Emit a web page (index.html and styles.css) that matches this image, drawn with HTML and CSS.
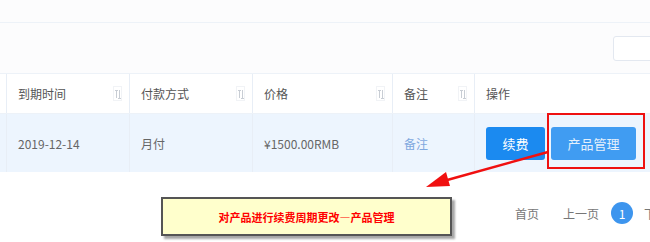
FILE: index.html
```html
<!DOCTYPE html>
<html lang="zh-CN">
<head>
  <meta charset="UTF-8">
  <title>产品列表</title>
  <link rel="stylesheet" href="styles.css">
</head>
<body>
  <div class="page">
    <div class="topbar"></div>

    <div class="toolbar">
      <input class="search" type="text">
    </div>

    <div class="table">
      <div class="row head">
        <div class="cell stub"></div>
        <div class="cell">到期时间<span class="sort"></span></div>
        <div class="cell">付款方式<span class="sort"></span></div>
        <div class="cell">价格<span class="sort"></span></div>
        <div class="cell">备注<span class="sort"></span></div>
        <div class="cell">操作</div>
      </div>
      <div class="row data">
        <div class="cell stub"></div>
        <div class="cell">2019-12-14</div>
        <div class="cell">月付</div>
        <div class="cell">¥1500.00RMB</div>
        <div class="cell"><a class="link">备注</a></div>
        <div class="cell actions">
          <button class="btn btn-renew">续费</button>
          <button class="btn btn-manage">产品管理</button>
        </div>
      </div>
    </div>

    <div class="pager">
      <span class="pager-item">首页</span>
      <span class="pager-item">上一页</span>
      <span class="pager-current">1</span>
      <span class="pager-item">下一页</span>
    </div>

    <!-- annotation layer -->
    <div class="mark-box"></div>
    <svg class="mark-arrow" width="650" height="242" viewBox="0 0 650 242">
      <line x1="548" y1="152" x2="440" y2="182" stroke="#f01010" stroke-width="2.5"/>
      <polygon points="426,187 446,172 450,186" fill="#f01010"/>
    </svg>
    <div class="note">对产品进行续费周期更改—产品管理</div>
  </div>
</body>
</html>
```

FILE: styles.css
```css
* {
  margin: 0;
  padding: 0;
  box-sizing: border-box;
}

body {
  width: 650px;
  height: 242px;
  overflow: hidden;
  background: #fff;
  font-family: "Noto Sans CJK SC", "Noto Sans", sans-serif;
  font-size: 12px;
  color: #666;
}

.page {
  position: relative;
  height: 242px;
  overflow: hidden;
}

.topbar {
  height: 23px;
  background: #fcfcfd;
  border-bottom: 1px solid #edf2f8;
}

.toolbar {
  height: 50px;
  background: #fcfcfd;
  display: flex;
  justify-content: flex-end;
  align-items: center;
  padding-top: 1px;
}

.search {
  width: 50px;
  height: 25px;
  margin-right: -13px;
  border: 1px solid #e3e8f0;
  border-radius: 3px;
  background: #fff;
}

/* Table */
.table {
  border-top: 1px solid #edf2f8;
}

.row {
  display: grid;
  grid-template-columns: 7px 123px 123px 140px 82px 1fr;
}

.head {
  height: 40px;
  background: #fff;
  border-bottom: 1px solid #edf2f8;
  color: #555;
}

.data {
  height: 58px;
  background: #edf5fe;
}

.cell {
  display: flex;
  align-items: center;
  padding-left: 11px;
  border-right: 1px solid #e8eef6;
  position: relative;
}

.cell:last-child {
  border-right: none;
}

.stub {
  padding: 0;
}

.sort {
  position: absolute;
  right: 7px;
  top: 12px;
  width: 9px;
  height: 15px;
  border: 1px solid #f1f3f6;
  background:
    linear-gradient(#c8cdd4, #c8cdd4) 2px 3px / 1px 8px no-repeat,
    linear-gradient(#c8cdd4, #c8cdd4) 5px 3px / 1px 9px no-repeat,
    linear-gradient(#c8cdd4, #c8cdd4) 1px 3px / 3px 1px no-repeat,
    linear-gradient(#c8cdd4, #c8cdd4) 4px 11px / 3px 1px no-repeat;
}

.link {
  color: #7fa8de;
}

.actions {
  gap: 6px;
}

.btn {
  height: 33px;
  border: none;
  border-radius: 3px;
  font-family: inherit;
  font-size: 13px;
  color: #fff;
}

.btn-renew {
  width: 59px;
  background: #1b8af0;
}

.btn-manage {
  width: 85px;
  background: #409cf2;
  color: #e4f0fc;
}

/* Pagination */
.pager {
  display: flex;
  justify-content: flex-end;
  align-items: center;
  height: 22px;
  margin-top: 30px;
  margin-right: -54px;
  color: #777;
}

.pager-item {
  margin-right: 24px;
  white-space: nowrap;
}

.pager-current {
  width: 22px;
  height: 22px;
  border-radius: 50%;
  background: #3d95ee;
  color: #fff;
  display: flex;
  align-items: center;
  justify-content: center;
  margin-left: -12px;
  margin-right: 11px;
}

/* Annotations */
.mark-box {
  position: absolute;
  left: 547px;
  top: 113px;
  width: 98px;
  height: 56px;
  border: 2px solid #ee1111;
}

.mark-arrow {
  position: absolute;
  left: 0;
  top: 0;
  pointer-events: none;
}

.note {
  position: absolute;
  left: 161px;
  top: 197px;
  width: 291px;
  height: 39px;
  background: #ffffcc;
  border: 2px solid #555;
  box-shadow: 3px 3px 2px rgba(0, 0, 0, 0.35);
  color: #f00;
  font-weight: bold;
  font-size: 11px;
  display: flex;
  align-items: center;
  justify-content: center;
  padding-top: 1px;
}
```
